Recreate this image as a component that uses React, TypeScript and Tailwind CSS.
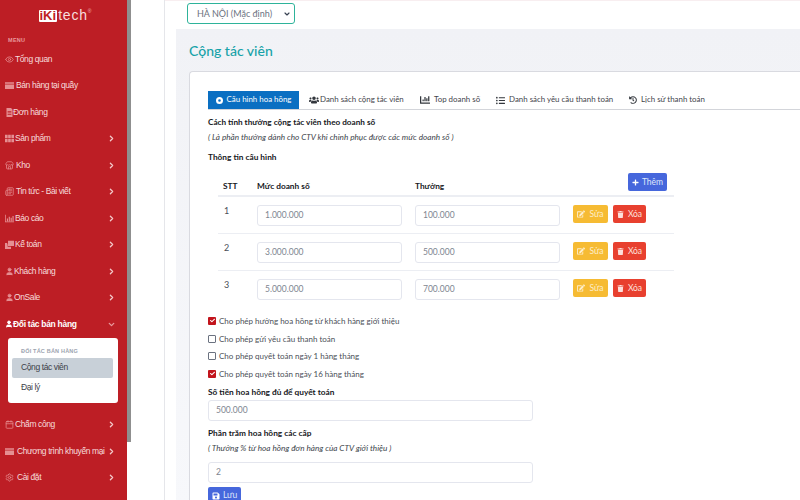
import { Calendar, ChevronDown, ChevronRight, Eye, Newspaper, Settings, Store, User } from 'lucide-react';
import { FaChartBar, FaCheck, FaEdit, FaHistory, FaListUl, FaPlus, FaSave, FaTrash, FaUsers } from 'react-icons/fa';
import { FaCircleDot } from 'react-icons/fa6';
import type { ReactNode } from 'react';

const sans = "font-['Liberation_Sans',Arial,sans-serif]";

const Svg = ({ children }: { children: ReactNode }) => (
  <svg width="9" height="9" viewBox="0 0 12 12" fill="currentColor">
    {children}
  </svg>
);

const CardIcon = () => (
  <Svg>
    <path d="M0 1.5h12v2H0zM0 4.5h12v6H0zM1.5 7.5h4v1h-4z" />
  </Svg>
);
const FileIcon = () => (
  <Svg>
    <path d="M2 0h6l2 2v10H2zM3.5 4v1h5V4zm0 2v1h5V6zm0 2v1h5V8z" fillRule="evenodd" />
  </Svg>
);
const GridIcon = () => (
  <Svg>
    <path d="M0 1h3.5v4.5H0zM4.2 1h3.5v4.5H4.2zM8.5 1H12v4.5H8.5zM0 6.5h3.5V11H0zM4.2 6.5h3.5V11H4.2zM8.5 6.5H12V11H8.5z" />
  </Svg>
);
const ChartIcon = () => (
  <Svg>
    <path d="M0 1h1v9h11v1H0zM2.5 6h1.5v3.500H2.500zM5 3.500h1.500V9.500H5zM7.500 5H9v4.500H7.500zM10 2.500h1.500v7H10z" />
  </Svg>
);
const CopyIcon = () => (
  <Svg>
    <path d="M4 1h8v7H4zM0 4h3v1.500h.500V9H8v3H0z" />
  </Svg>
);

const navTop = [
  { label: 'Tổng quan', icon: <Eye size={9} />, w: 'w-[10px]', arrow: false },
  { label: 'Bán hàng tại quầy', icon: <CardIcon />, w: 'w-[11px]', arrow: false },
  { label: 'Đơn hàng', icon: <FileIcon />, w: 'w-[8px]', arrow: false },
  { label: 'Sản phẩm', icon: <GridIcon />, w: 'w-[10px]', arrow: true },
  { label: 'Kho', icon: <Store size={9} />, w: 'w-[11px]', arrow: true },
  { label: 'Tin tức - Bài viết', icon: <Newspaper size={9} />, w: 'w-[11px]', arrow: true },
  { label: 'Báo cáo', icon: <ChartIcon />, w: 'w-[10px]', arrow: true },
  { label: 'Kế toán', icon: <CopyIcon />, w: 'w-[10px]', arrow: true },
  { label: 'Khách hàng', icon: <User size={9} fill="currentColor" />, w: 'w-[9px]', arrow: true },
  { label: 'OnSale', icon: <User size={9} fill="currentColor" />, w: 'w-[9px]', arrow: true },
];

const navBottom = [
  { label: 'Chấm công', icon: <Calendar size={9} />, w: 'w-[10px]', arrow: true },
  { label: 'Chương trình khuyến mại', icon: <CardIcon />, w: 'w-[12px]', arrow: true },
  { label: 'Cài đặt', icon: <Settings size={9} />, w: 'w-[12px]', arrow: true },
];

const NavItem = ({ label, icon, w, arrow }: { label: string; icon: ReactNode; w: string; arrow: boolean }) => (
  <div className="flex h-[26.500px] items-center pl-[5px] pr-[11px] text-[8.500px] tracking-[-0.4px] text-[#f6dcdc]">
    <span className={`${w} shrink-0 text-[#e58f92]`}>{icon}</span>
    <span className="flex-1 whitespace-nowrap">{label}</span>
    {arrow && <ChevronRight size={9} strokeWidth={3.500} className="shrink-0 text-[#f3c9ca]" />}
  </div>
);

const Sidebar = () => (
  <aside className={`${sans} flex h-full w-[127px] shrink-0 flex-col bg-[#bd1e25]`}>
    <div className="flex h-[22px] items-end justify-center pl-[3px]">
      <span className="rounded-[1px] bg-white px-[1px] text-[13px] leading-[12px] font-bold text-[#bd1e25]">iKi</span>
      <span className="ml-[1px] text-[14px] leading-[13px] font-light tracking-[0.8px] text-[#f7dede]">tech</span>
      <span className="mb-[8px] text-[5px] leading-[5px] text-[#f0bcbd]">®</span>
    </div>
    <div className="mt-[14px] h-[9px] pl-[8px] text-[5.500px] leading-[9px] font-bold tracking-[0.3px] text-[#e99a9d]">MENU</div>
    <div className="mt-[1px]">
      {navTop.map((item) => (
        <NavItem key={item.label} {...item} />
      ))}
    </div>
    <div className="flex h-[26.500px] items-center pl-[5px] pr-[11px] text-[8.500px] font-bold tracking-[-0.3px] text-white">
      <span className="w-[8px] shrink-0">
        <User size={8} fill="currentColor" strokeWidth={3} />
      </span>
      <span className="flex-1 whitespace-nowrap">Đối tác bán hàng</span>
      <ChevronDown size={9} strokeWidth={3.500} className="text-[#e99a9d]" />
    </div>
    <div className="ml-[8px] mr-[9px] h-[65px] rounded-[3px] bg-white pl-[4px] pr-[5px] pt-[9px]">
      <div className="h-[8px] pl-[9px] text-[5.500px] leading-[8px] font-bold tracking-[0.2px] text-[#9ca3af]">ĐỐI TÁC BÁN HÀNG</div>
      <div className="mt-[3px] flex h-[20px] items-center rounded-[2px] bg-[#c8d0d8] pl-[9px] text-[8.500px] tracking-[-0.4px] text-[#3c4148]">Cộng tác viên</div>
      <div className="flex h-[20px] items-center pl-[9px] text-[8.500px] tracking-[-0.4px] text-[#3c4148]">Đại lý</div>
    </div>
    <div className="mt-[9px]">
      {navBottom.map((item) => (
        <NavItem key={item.label} {...item} />
      ))}
    </div>
  </aside>
);

const tabs = [
  { label: 'Danh sách cộng tác viên', icon: <FaUsers size={10} />, w: 'w-[111px]', gap: 'gap-[1px]' },
  { label: 'Top doanh số', icon: <FaChartBar size={10} />, w: 'w-[76px]', gap: 'gap-[4px]' },
  { label: 'Danh sách yêu cầu thanh toán', icon: <FaListUl size={9} />, w: 'w-[133px]', gap: 'gap-[4px]' },
  { label: 'Lịch sử thanh toán', icon: <FaHistory size={8} />, w: 'w-[90px]', gap: 'gap-[4px]' },
];

const rows = [
  { stt: '1', sales: '1.000.000', bonus: '100.000' },
  { stt: '2', sales: '3.000.000', bonus: '500.000' },
  { stt: '3', sales: '5.000.000', bonus: '700.000' },
];

const Field = ({ value, className }: { value: string; className: string }) => (
  <div className={`${className} flex h-[21px] items-center rounded-[3px] border border-[#e4e6ee] bg-white pl-[7px] text-[8.500px] text-[#7e8590]`}>{value}</div>
);

const checks = [
  { label: 'Cho phép hưởng hoa hồng từ khách hàng giới thiệu', on: true },
  { label: 'Cho phép gửi yêu cầu thanh toán', on: false },
  { label: 'Cho phép quyết toán ngày 1 hàng tháng', on: false },
  { label: 'Cho phép quyết toán ngày 16 hàng tháng', on: true },
];

const Check = ({ label, on }: { label: string; on: boolean }) => (
  <div className="flex h-[17.700px] items-center gap-[3px] text-[8px] text-[#4a4f57]">
    {on ? (
      <span className="flex h-[8px] w-[8px] items-center justify-center rounded-[1px] bg-[#c2141c] text-white">
        <FaCheck size={5} />
      </span>
    ) : (
      <span className="h-[8px] w-[8px] rounded-[1px] border border-[#6b7280] bg-white" />
    )}
    <span>{label}</span>
  </div>
);

export default function App() {
  return (
    <div className="flex h-[500px] w-[800px] overflow-hidden bg-white font-['Lato','Noto_Sans',sans-serif]">
      <Sidebar />
      <div className="h-[442px] w-[4px] shrink-0 bg-[#8f8f8f]" />
      <div className="w-[34px] shrink-0 border-r border-[#e5e6ea]" />
      <main className="flex min-w-0 flex-1 flex-col border-t border-[#f8eef0] pl-[11px]">
        <div className="h-[28px] shrink-0 pl-[11px] pt-[2px]">
          <div className="flex h-[21px] w-[108px] items-center justify-between rounded-[3px] border border-[#2eb39a] pl-[9px] pr-[3px] text-[9px] text-[#6b7280]">
            <span>HÀ NỘI (Mặc định)</span>
            <ChevronDown size={8} strokeWidth={3.500} className="text-[#374151]" />
          </div>
        </div>
        <div className="flex flex-1 flex-col bg-gradient-to-b from-[#f1f2f6] to-[#f7f8fb] pl-[13px]">
          <h1 className="h-[42px] shrink-0 pt-[12px] text-[14px] leading-[20px] font-medium text-[#17a2a8]">Cộng tác viên</h1>
          <div className="flex-1 rounded-tl-[4px] border-t border-l border-[#d9dae0] bg-white pl-[18px]">
            <div className="mt-[19px] flex h-[19px] border-b border-[#d3d5da] text-[7.900px] text-[#3f444b]">
              <div className="flex w-[91px] shrink-0 items-center justify-center gap-[4px] bg-[#0a6fc2] text-white">
                <FaCircleDot size={7} />
                <span>Cấu hình hoa hồng</span>
              </div>
              {tabs.map((tab) => (
                <div key={tab.label} className={`${tab.w} ${tab.gap} flex shrink-0 items-center whitespace-nowrap pl-[10px]`}>
                  <span className="text-[#33373d]">{tab.icon}</span>
                  <span>{tab.label}</span>
                </div>
              ))}
            </div>

            <p className="mt-[5px] h-[15px] text-[8.200px] leading-[15px] font-bold text-[#16181c]">Cách tính thưởng cộng tác viên theo doanh số</p>
            <p className="h-[15px] text-[8.200px] leading-[15px] text-[#40454c] italic">( Là phần thưởng dành cho CTV khi chinh phục được các mức doanh số )</p>
            <p className="mt-[5px] h-[15px] text-[8.300px] leading-[15px] font-bold text-[#16181c]">Thông tin cấu hình</p>

            <div className="ml-[10px] w-[456px]">
              <div className="flex h-[32px] items-end border-b-2 border-[#eceef3] pb-[3px] text-[8.300px] font-bold text-[#16181c]">
                <span className="w-[39px] pl-[5px]">STT</span>
                <span className="w-[158px]">Mức doanh số</span>
                <span className="w-[160px]">Thưởng</span>
                <span className="mb-[1px] ml-[53px] flex h-[18px] w-[39px] items-center justify-center gap-[3px] rounded-[2px] bg-[#4667dc] text-[8.500px] font-normal text-[#dfe6fb]">
                  <FaPlus size={7} className="text-white" />
                  Thêm
                </span>
              </div>
              {rows.map((row, i) => (
                <div key={row.stt} className={`flex h-[37px] items-start pt-[8px] text-[9px] text-[#4a4f57] ${i < 2 ? 'border-b border-[#eceef3]' : ''}`}>
                  <span className="-mt-px w-[39px] pl-[6px]">{row.stt}</span>
                  <Field value={row.sales} className="w-[145px]" />
                  <div className="w-[13px]" />
                  <Field value={row.bonus} className="w-[145px]" />
                  <div className="w-[13px]" />
                  <span className="flex h-[18px] w-[35px] items-center justify-center gap-[4px] rounded-[2px] bg-[#f6bb33] text-[8.500px] text-[#fdeecb]">
                    <FaEdit size={8} />
                    Sửa
                  </span>
                  <span className="ml-[5px] flex h-[18px] w-[33px] items-center justify-center gap-[4px] rounded-[2px] bg-[#e8402f] text-[8.500px] text-[#fde0dc]">
                    <FaTrash size={7} />
                    Xóa
                  </span>
                </div>
              ))}
            </div>

            <div className="mt-[4px]">
              {checks.map((c) => (
                <Check key={c.label} {...c} />
              ))}
            </div>
            <p className="h-[17px] text-[8.300px] leading-[18px] font-bold text-[#16181c]">Số tiền hoa hồng đủ để quyết toán</p>
            <Field value="500.000" className="w-[325px]" />
            <p className="mt-[3px] h-[18px] text-[8.300px] leading-[18px] font-bold text-[#16181c]">Phần trăm hoa hồng các cấp</p>
            <p className="h-[13px] text-[8.200px] leading-[13px] text-[#40454c] italic">( Thưởng % từ hoa hồng đơn hàng của CTV giới thiệu )</p>
            <Field value="2" className="mt-[7px] w-[325px]" />
            <span className="mt-[4px] flex h-[18px] w-[33px] items-center justify-center gap-[3px] rounded-[2px] bg-[#4667dc] text-[8.500px] text-[#dfe6fb]">
              <FaSave size={8} className="text-white" />
              Lưu
            </span>
          </div>
        </div>
      </main>
    </div>
  );
}
